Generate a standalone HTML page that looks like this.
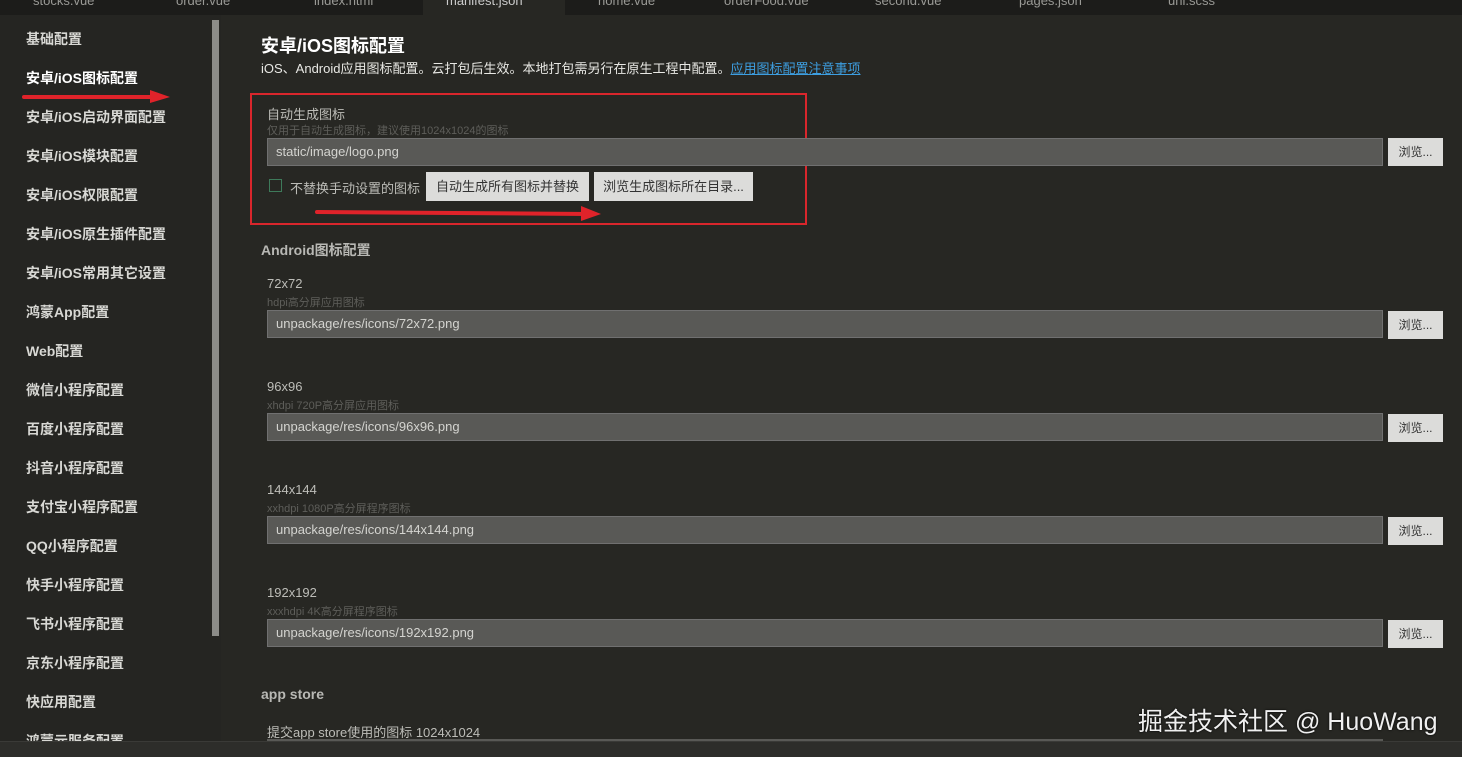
<!DOCTYPE html>
<html><head><meta charset="utf-8"><style>
*{margin:0;padding:0;box-sizing:border-box}
body{width:1462px;height:757px;overflow:hidden;background:#272723;font-family:"Liberation Sans","Noto Sans CJK SC",sans-serif;position:relative;color:#ddd}
.tabs{position:absolute;left:0;top:0;width:1462px;height:15px;background:#1c1c1a}
.tab{position:absolute;top:-7px;font-size:13px;color:#9a9a96}
.side{position:absolute;left:0;top:15px;width:221px;height:726px;background:#252522}
.side div{position:absolute;left:26px;font-size:14px;font-weight:bold;color:#d8d8d4;transform:translateY(-50%)}
.sb{position:absolute;left:212px;top:20px;width:7px;height:616px;background:#8c8c88}
.abs{position:absolute}
.inp{position:absolute;left:267px;width:1116px;height:28px;background:#595956;border:1px solid #707070;color:#d4d4d0;font-size:13px;padding-left:8px;line-height:26px}
.btn{position:absolute;left:1388px;width:55px;height:28px;background:#dcdcda;color:#333;font-size:12px;line-height:28px;text-align:center}
.lbl{position:absolute;left:267px;font-size:13px;color:#bdbdb8}
.sub{position:absolute;left:267px;font-size:11px;color:#5e5e5a}
.h{position:absolute;left:261px;font-size:14px;font-weight:bold;color:#b8b8b4}
.bottom{position:absolute;left:0;top:741px;width:1462px;height:16px;background:#2d2d2a;border-top:1px solid #3a3a37}
</style></head><body>
<div class="tabs">
<span class="tab" style="left:33px">stocks.vue</span><span class="tab" style="left:176px">order.vue</span><span class="tab" style="left:314px">index.html</span>
<div style="position:absolute;left:423px;top:0;width:142px;height:15px;background:#272723"></div>
<span class="tab" style="left:446px;color:#ccc">manifest.json</span><span class="tab" style="left:598px">home.vue</span><span class="tab" style="left:724px">orderFood.vue</span><span class="tab" style="left:875px">second.vue</span><span class="tab" style="left:1019px">pages.json</span><span class="tab" style="left:1168px">uni.scss</span>
</div>
<div class="side">
<div style="top:24px">基础配置</div><div style="top:63px;color:#fff">安卓/iOS图标配置</div><div style="top:102px">安卓/iOS启动界面配置</div><div style="top:141px">安卓/iOS模块配置</div><div style="top:180px">安卓/iOS权限配置</div><div style="top:219px">安卓/iOS原生插件配置</div><div style="top:258px">安卓/iOS常用其它设置</div><div style="top:297px">鸿蒙App配置</div><div style="top:336px">Web配置</div><div style="top:375px">微信小程序配置</div><div style="top:414px">百度小程序配置</div><div style="top:453px">抖音小程序配置</div><div style="top:492px">支付宝小程序配置</div><div style="top:531px">QQ小程序配置</div><div style="top:570px">快手小程序配置</div><div style="top:609px">飞书小程序配置</div><div style="top:648px">京东小程序配置</div><div style="top:687px">快应用配置</div><div style="top:726px">鸿蒙元服务配置</div>
</div>
<div class="sb"></div>
<svg class="abs" style="left:22px;top:88px" width="150" height="18"><path d="M2 9 L135 9" stroke="#e0232a" stroke-width="4" stroke-linecap="round"/><path d="M128 2 L148 9 L128 15 Z" fill="#e0232a"/></svg>
<div class="abs" style="left:261px;top:32px;font-size:18px;font-weight:bold;color:#fff">安卓/iOS图标配置</div>
<div class="abs" style="left:261px;top:58px;font-size:13px;color:#e8e8e4">iOS、Android应用图标配置。云打包后生效。本地打包需另行在原生工程中配置。<span style="color:#3d9ee0;text-decoration:underline">应用图标配置注意事项</span></div>
<div class="abs" style="left:250px;top:93px;width:557px;height:132px;border:2px solid #d9262c"></div>
<div class="lbl" style="top:104px">自动生成图标</div>
<div class="sub" style="top:122px">仅用于自动生成图标，建议使用1024x1024的图标</div>
<div class="inp" style="top:138px">static/image/logo.png</div><div class="btn" style="top:138px">浏览...</div>
<div class="abs" style="left:269px;top:179px;width:13px;height:13px;border:1px solid #3e7a5a"></div>
<div class="abs" style="left:290px;top:178px;font-size:13px;color:#bdbdb8">不替换手动设置的图标</div>
<div class="abs" style="left:426px;top:172px;width:163px;height:29px;background:#dcdcda;color:#333;font-size:13px;line-height:29px;text-align:center">自动生成所有图标并替换</div>
<div class="abs" style="left:594px;top:172px;width:159px;height:29px;background:#dcdcda;color:#333;font-size:13px;line-height:29px;text-align:center">浏览生成图标所在目录...</div>
<svg class="abs" style="left:313px;top:203px" width="290" height="20"><path d="M4 9 L275 11" stroke="#e0232a" stroke-width="4" stroke-linecap="round"/><path d="M268 3 L288 11 L268 18 Z" fill="#e0232a"/></svg>
<div class="h" style="top:240px">Android图标配置</div>
<div class="lbl" style="top:276px">72x72</div><div class="sub" style="top:294px">hdpi高分屏应用图标</div>
<div class="inp" style="top:310px">unpackage/res/icons/72x72.png</div><div class="btn" style="top:311px">浏览...</div>
<div class="lbl" style="top:379px">96x96</div><div class="sub" style="top:397px">xhdpi 720P高分屏应用图标</div>
<div class="inp" style="top:413px">unpackage/res/icons/96x96.png</div><div class="btn" style="top:414px">浏览...</div>
<div class="lbl" style="top:482px">144x144</div><div class="sub" style="top:500px">xxhdpi 1080P高分屏程序图标</div>
<div class="inp" style="top:516px">unpackage/res/icons/144x144.png</div><div class="btn" style="top:517px">浏览...</div>
<div class="lbl" style="top:585px">192x192</div><div class="sub" style="top:603px">xxxhdpi 4K高分屏程序图标</div>
<div class="inp" style="top:619px">unpackage/res/icons/192x192.png</div><div class="btn" style="top:620px">浏览...</div>
<div class="h" style="top:686px">app store</div>
<div class="lbl" style="top:722px">提交app store使用的图标 1024x1024</div>
<div class="abs" style="left:267px;top:739px;width:1116px;height:3px;background:#595956"></div>
<div class="abs" style="left:1138px;top:702px;font-size:25px;color:#f0f0f0;text-shadow:0 0 2px #000">掘金技术社区 @ HuoWang</div>
<div class="bottom"></div>
</body></html>
